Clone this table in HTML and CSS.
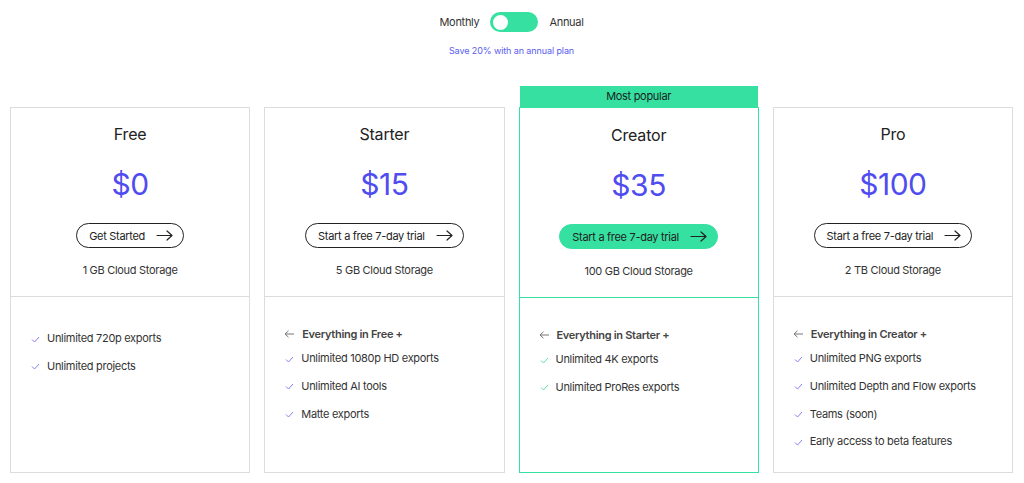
FILE: index.html
```html
<!DOCTYPE html>
<html lang="en">
<head>
<meta charset="utf-8">
<title>Pricing</title>
<link rel="stylesheet" href="styles.css">
</head>
<body>
<div class="page">
  <div class="billing">
    <div class="toggle-row">
      <span class="toggle-label">Monthly</span>
      <span class="switch"><span class="knob"></span></span>
      <span class="toggle-label">Annual</span>
    </div>
    <p class="save">Save 20% with an annual plan</p>
  </div>

  <div class="plans">
    <div class="card">
      <div class="card-top">
        <h2 class="plan-name">Free</h2>
        <div class="price">$0</div>
        <a class="btn">Get Started
          <svg class="arrow" width="17" height="11" viewBox="0 0 17 11"><path d="M1 5.5H16M11 1l5 4.5-5 4.5" fill="none" stroke="#222" stroke-width="1.2" stroke-linecap="round" stroke-linejoin="round"/></svg>
        </a>
        <div class="storage">1 GB Cloud Storage</div>
      </div>
      <ul class="features features-free">
        <li class="item"><svg class="check" width="9" height="7" viewBox="0 0 9 7"><path d="M1 3.5l2.5 2.5L8 1" fill="none" stroke="#8a80f2" stroke-width="1"/></svg>Unlimited 720p exports</li>
        <li class="item"><svg class="check" width="9" height="7" viewBox="0 0 9 7"><path d="M1 3.5l2.5 2.5L8 1" fill="none" stroke="#8a80f2" stroke-width="1"/></svg>Unlimited projects</li>
      </ul>
    </div>

    <div class="card">
      <div class="card-top">
        <h2 class="plan-name">Starter</h2>
        <div class="price">$15</div>
        <a class="btn">Start a free 7-day trial
          <svg class="arrow" width="17" height="11" viewBox="0 0 17 11"><path d="M1 5.5H16M11 1l5 4.5-5 4.5" fill="none" stroke="#222" stroke-width="1.2" stroke-linecap="round" stroke-linejoin="round"/></svg>
        </a>
        <div class="storage">5 GB Cloud Storage</div>
      </div>
      <ul class="features">
        <li class="item head"><svg class="back" width="11" height="8" viewBox="0 0 11 8"><path d="M10 4H1M4.5 0.8L1 4l3.5 3.2" fill="none" stroke="#777" stroke-width="1"/></svg>Everything in Free +</li>
        <li class="item"><svg class="check" width="9" height="7" viewBox="0 0 9 7"><path d="M1 3.5l2.5 2.5L8 1" fill="none" stroke="#8a80f2" stroke-width="1"/></svg>Unlimited 1080p HD exports</li>
        <li class="item"><svg class="check" width="9" height="7" viewBox="0 0 9 7"><path d="M1 3.5l2.5 2.5L8 1" fill="none" stroke="#8a80f2" stroke-width="1"/></svg>Unlimited AI tools</li>
        <li class="item"><svg class="check" width="9" height="7" viewBox="0 0 9 7"><path d="M1 3.5l2.5 2.5L8 1" fill="none" stroke="#8a80f2" stroke-width="1"/></svg>Matte exports</li>
      </ul>
    </div>

    <div class="card popular">
      <div class="badge">Most popular</div>
      <div class="card-top">
        <h2 class="plan-name">Creator</h2>
        <div class="price">$35</div>
        <a class="btn btn-primary">Start a free 7-day trial
          <svg class="arrow" width="17" height="11" viewBox="0 0 17 11"><path d="M1 5.5H16M11 1l5 4.5-5 4.5" fill="none" stroke="#222" stroke-width="1.2" stroke-linecap="round" stroke-linejoin="round"/></svg>
        </a>
        <div class="storage">100 GB Cloud Storage</div>
      </div>
      <ul class="features">
        <li class="item head"><svg class="back" width="11" height="8" viewBox="0 0 11 8"><path d="M10 4H1M4.5 0.8L1 4l3.5 3.2" fill="none" stroke="#777" stroke-width="1"/></svg>Everything in Starter +</li>
        <li class="item"><svg class="check" width="9" height="7" viewBox="0 0 9 7"><path d="M1 3.5l2.5 2.5L8 1" fill="none" stroke="#5fe0b0" stroke-width="1"/></svg>Unlimited 4K exports</li>
        <li class="item"><svg class="check" width="9" height="7" viewBox="0 0 9 7"><path d="M1 3.5l2.5 2.5L8 1" fill="none" stroke="#5fe0b0" stroke-width="1"/></svg>Unlimited ProRes exports</li>
      </ul>
    </div>

    <div class="card">
      <div class="card-top">
        <h2 class="plan-name">Pro</h2>
        <div class="price">$100</div>
        <a class="btn">Start a free 7-day trial
          <svg class="arrow" width="17" height="11" viewBox="0 0 17 11"><path d="M1 5.5H16M11 1l5 4.5-5 4.5" fill="none" stroke="#222" stroke-width="1.2" stroke-linecap="round" stroke-linejoin="round"/></svg>
        </a>
        <div class="storage">2 TB Cloud Storage</div>
      </div>
      <ul class="features">
        <li class="item head"><svg class="back" width="11" height="8" viewBox="0 0 11 8"><path d="M10 4H1M4.5 0.8L1 4l3.5 3.2" fill="none" stroke="#777" stroke-width="1"/></svg>Everything in Creator +</li>
        <li class="item"><svg class="check" width="9" height="7" viewBox="0 0 9 7"><path d="M1 3.5l2.5 2.5L8 1" fill="none" stroke="#8a80f2" stroke-width="1"/></svg>Unlimited PNG exports</li>
        <li class="item"><svg class="check" width="9" height="7" viewBox="0 0 9 7"><path d="M1 3.5l2.5 2.5L8 1" fill="none" stroke="#8a80f2" stroke-width="1"/></svg>Unlimited Depth and Flow exports</li>
        <li class="item"><svg class="check" width="9" height="7" viewBox="0 0 9 7"><path d="M1 3.5l2.5 2.5L8 1" fill="none" stroke="#8a80f2" stroke-width="1"/></svg>Teams (soon)</li>
        <li class="item"><svg class="check" width="9" height="7" viewBox="0 0 9 7"><path d="M1 3.5l2.5 2.5L8 1" fill="none" stroke="#8a80f2" stroke-width="1"/></svg>Early access to beta features</li>
      </ul>
    </div>
  </div>
</div>
</body>
</html>
```

FILE: styles.css
```css
* { box-sizing: border-box; }
html, body { margin: 0; padding: 0; background: #fff; }
body {
  font-family: Inter, "Open Sans", "Liberation Sans", sans-serif;
  color: #222;
  font-size: 11px;
  letter-spacing: -0.3px;
}
.page {
  padding: 12px 11px 0 10px;
}
.billing {
  display: flex;
  flex-direction: column;
  align-items: center;
}
.toggle-row {
  display: flex;
  align-items: center;
  gap: 11px;
  height: 20px;
}
.toggle-label {
  font-size: 11px;
  color: #333;
  line-height: 20px;
}
.switch {
  width: 48px;
  height: 20px;
  border-radius: 10px;
  background: #36e0a0;
  display: flex;
  align-items: center;
  padding-left: 3px;
}
.knob {
  width: 15px;
  height: 15px;
  border-radius: 50%;
  background: #fff;
}
.save {
  margin: 13px 0 0 0;
  font-size: 9px;
  line-height: 12px;
  color: #5a5cf0;
  letter-spacing: -0.1px;
}
.plans {
  display: grid;
  grid-template-columns: repeat(4, 1fr);
  gap: 14px;
  margin-top: 50px;
}
.card {
  position: relative;
  border: 1px solid #dcdcdc;
  height: 366px;
  display: flex;
  flex-direction: column;
}
.card.popular {
  border-color: #36e0a0;
}
.badge {
  position: absolute;
  left: 0;
  right: 0;
  top: -22px;
  height: 21px;
  background: #36e0a0;
  color: #1d1d1d;
  font-size: 11px;
  line-height: 21px;
  text-align: center;
}
.card-top {
  display: flex;
  flex-direction: column;
  align-items: center;
  padding: 16px 0 18px;
  border-bottom: 1px solid #dcdcdc;
}
.popular .card-top { border-bottom-color: #36e0a0; padding-top: 17px; }
.plan-name {
  margin: 0;
  font-size: 16px;
  font-weight: 400;
  line-height: 20px;
  color: #222;
  letter-spacing: -0.2px;
}
.price {
  margin-top: 22px;
  font-size: 30px;
  line-height: 36px;
  color: #4f4cf0;
  font-weight: 400;
  letter-spacing: -0.5px;
}
.btn {
  margin-top: 21px;
  height: 25px;
  display: inline-flex;
  align-items: center;
  gap: 11px;
  padding: 0 10px 0 12px;
  border: 1px solid #222;
  border-radius: 13px;
  font-size: 11px;
  color: #222;
}
.btn-primary {
  background: #36e0a0;
  border-color: #36e0a0;
}
.arrow { display: block; }
.storage {
  margin-top: 14px;
  font-size: 11px;
  line-height: 16px;
  color: #333;
}
.features {
  list-style: none;
  margin: 0;
  padding: 29px 0 0 20px;
  display: flex;
  flex-direction: column;
  gap: 11.7px;
}
.features-free { padding-top: 33px; }
.item {
  display: flex;
  align-items: center;
  gap: 7px;
  font-size: 11px;
  line-height: 16px;
  color: #333;
}
.item .check { margin-top: 2px; }
.item.head {
  font-weight: 600;
  color: #444;
  margin-bottom: -3.5px;
  margin-left: -1px;
}
```
